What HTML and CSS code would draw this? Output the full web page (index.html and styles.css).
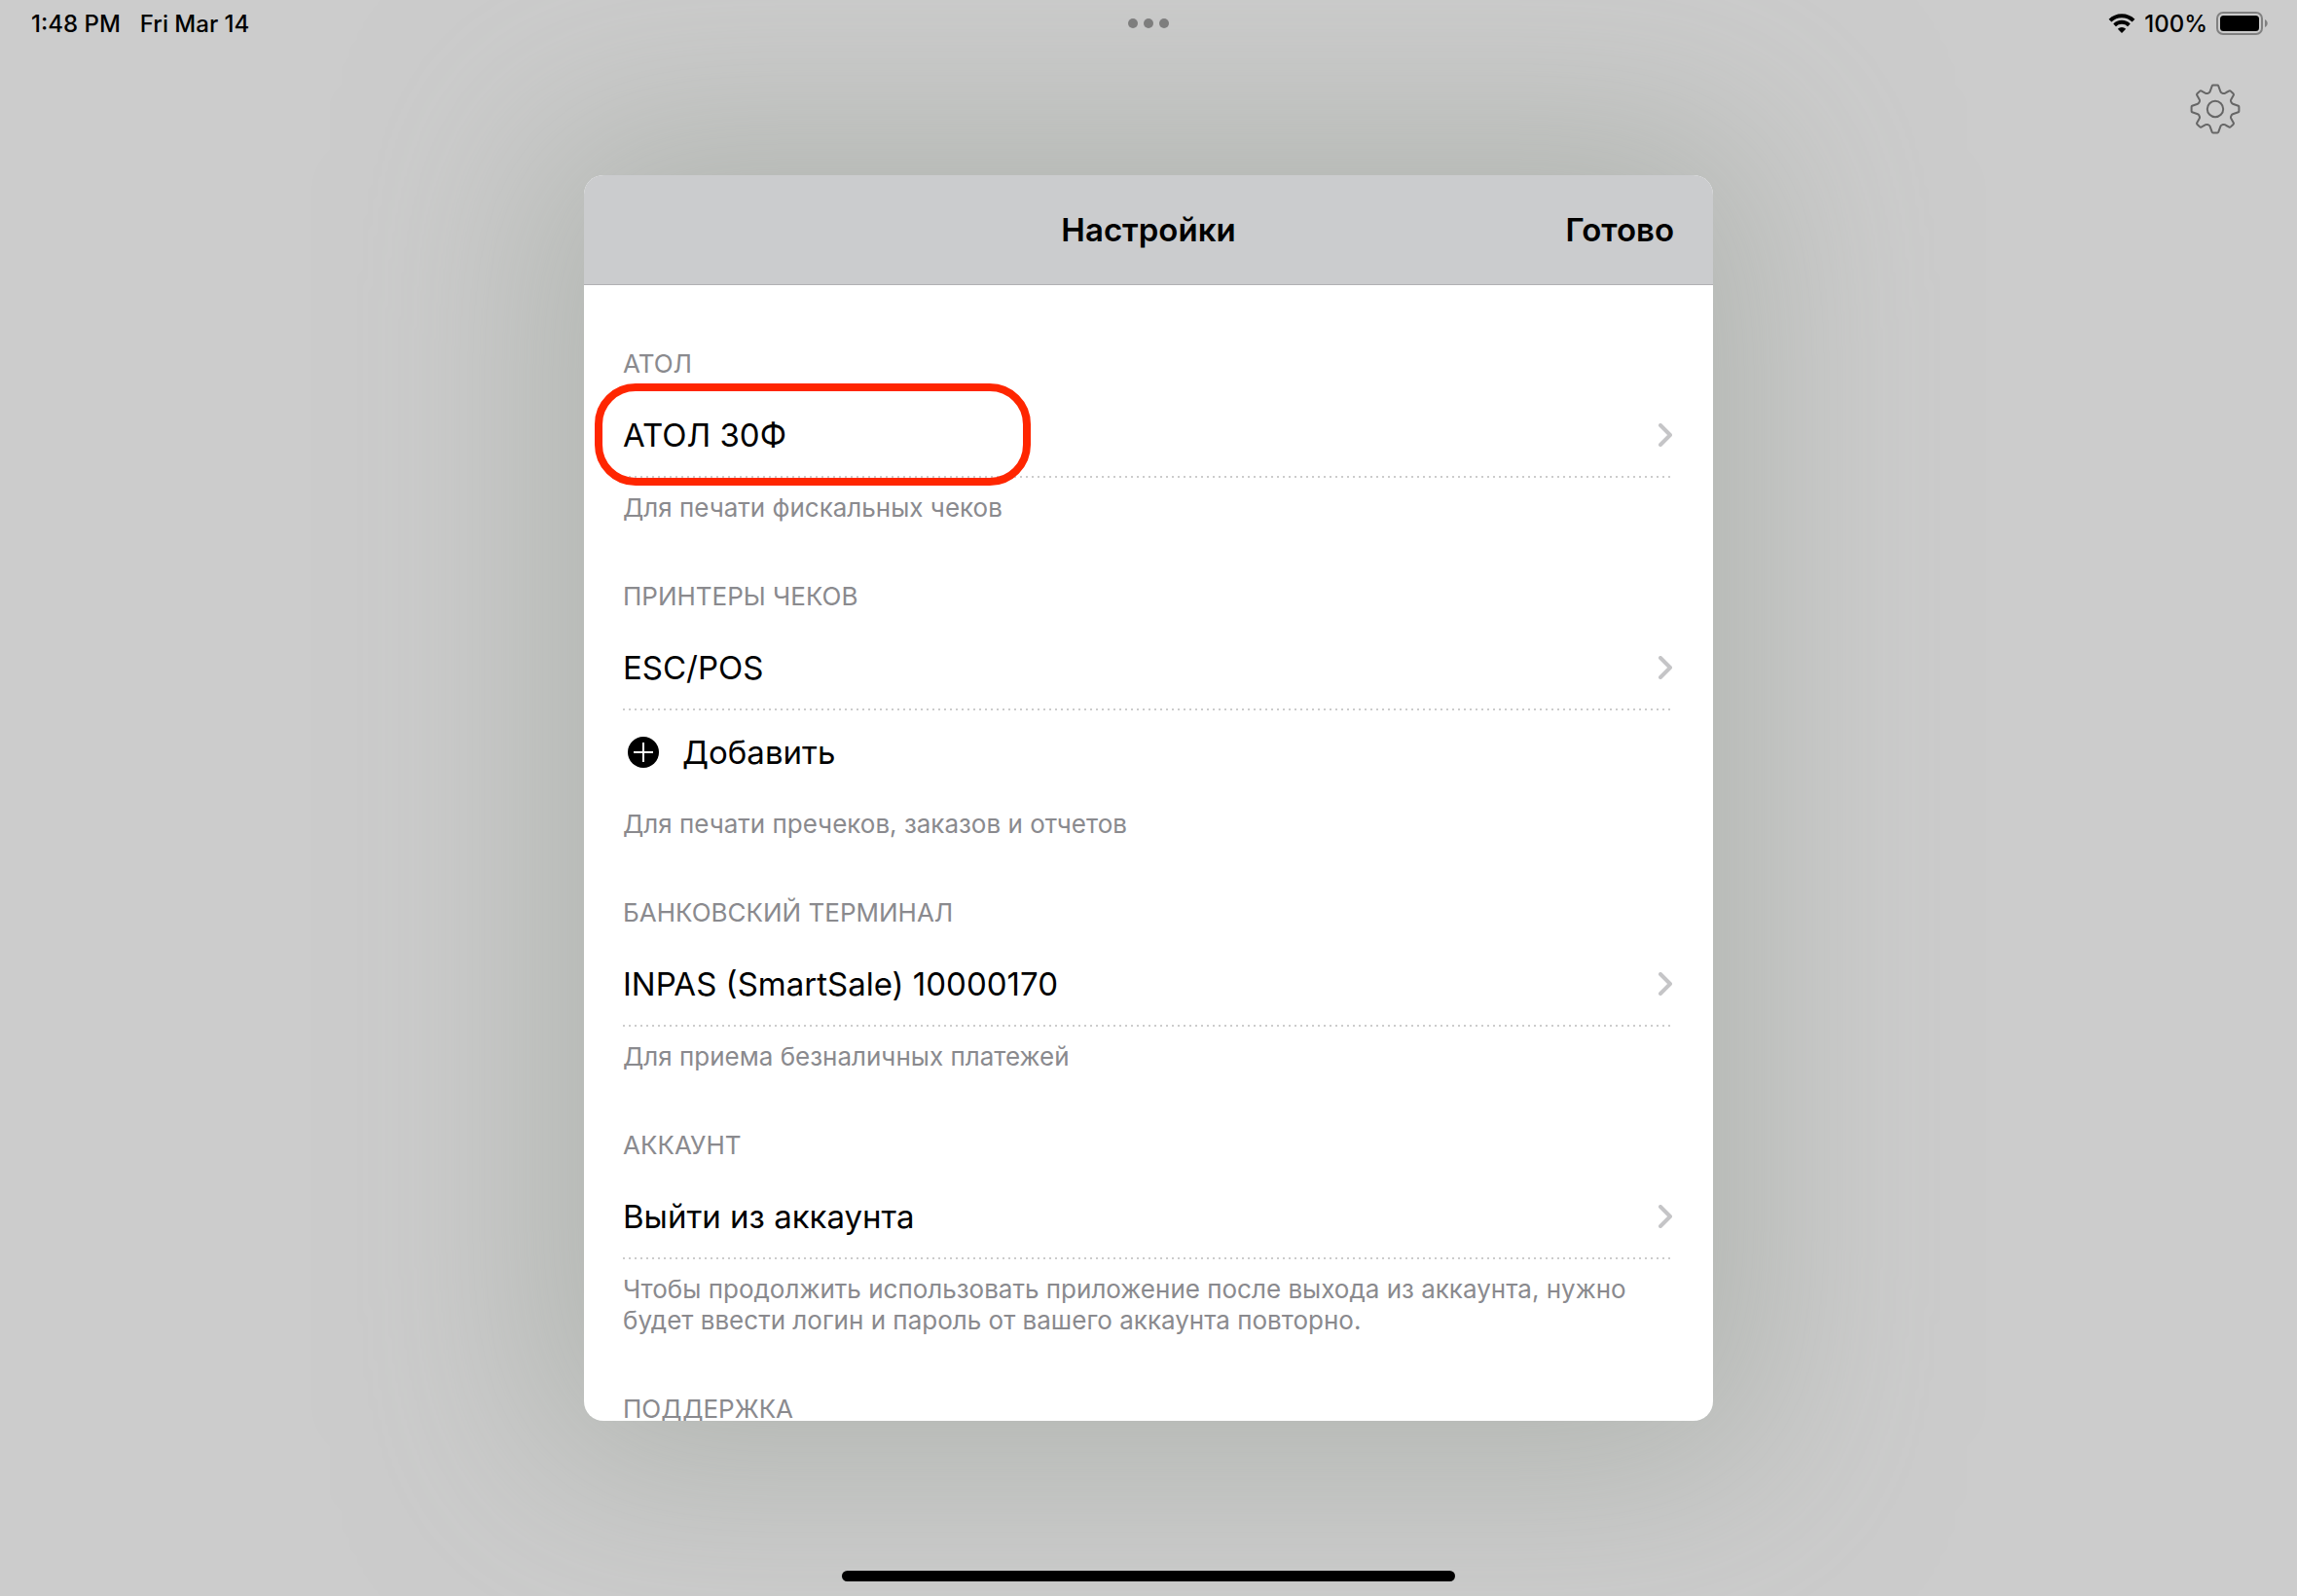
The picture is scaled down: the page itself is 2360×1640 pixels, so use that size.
FILE: index.html
```html
<!DOCTYPE html>
<html lang="ru">
<head>
    <meta charset="UTF-8">
    <meta name="viewport" content="width=device-width, initial-scale=1.0">
    <title>Настройки</title>
    <link rel="stylesheet" href="styles.css">
</head>
<body>

    <header class="status-bar">
        <div class="status-left">
            <span>1:48 PM</span>
            <span>Fri Mar 14</span>
        </div>
        <div class="status-dots">
            <i></i><i></i><i></i>
        </div>
        <div class="status-right">
            <svg class="wifi" width="28" height="20" viewBox="0 0 28 20">
                <path d="M2 7.2 A17 17 0 0 1 26 7.2" fill="none" stroke="#000" stroke-width="4"/>
                <path d="M6.6 11.8 A10.5 10.5 0 0 1 21.4 11.8" fill="none" stroke="#000" stroke-width="3.8"/>
                <path d="M14 20 L9.8 15.8 A6 6 0 0 1 18.2 15.8 Z" fill="#000"/>
            </svg>
            <span>100%</span>
            <svg class="battery" width="54" height="24" viewBox="0 0 54 24">
                <rect x="1" y="1" width="46" height="22" rx="6" fill="none" stroke="#808080" stroke-width="2"/>
                <rect x="4" y="4" width="40" height="16" rx="3.5" fill="#000"/>
                <path d="M50 8 C53.6 9.4 53.6 14.6 50 16 Z" fill="#808080"/>
            </svg>
        </div>
    </header>

    <div class="toolbar">
        <button class="gear-btn" aria-label="Настройки">
            <svg width="52" height="52" viewBox="0 0 52 52" fill="none" stroke="#666" stroke-width="2" stroke-linejoin="round">
                <path d="M22.7 2.3 Q23 1.6 23.8 1.6 H28.2 Q29 1.6 29.3 2.3 L31.4 8.1 Q31.8 9.2 32.9 9.6 L34 10 Q35 10.3 35.9 9.8 L40.4 7.4 Q41.2 7 41.8 7.6 L44.6 10.3 Q45.2 11 44.8 11.8 L42.3 16.2 Q41.8 17.1 42.1 18.1 L42.5 19.2 Q42.9 20.3 44 20.7 L49.7 22.7 Q50.4 23 50.4 23.8 V28.2 Q50.4 29 49.7 29.3 L44 31.3 Q42.9 31.7 42.5 32.8 L42.1 33.9 Q41.8 34.9 42.3 35.8 L44.8 40.2 Q45.2 41 44.6 41.7 L41.8 44.4 Q41.2 45 40.4 44.6 L35.9 42.2 Q35 41.7 34 42 L32.9 42.4 Q31.8 42.8 31.4 43.9 L29.3 49.7 Q29 50.4 28.2 50.4 H23.8 Q23 50.4 22.7 49.7 L20.6 43.9 Q20.2 42.8 19.1 42.4 L18 42 Q17 41.7 16.1 42.2 L11.6 44.6 Q10.8 45 10.2 44.4 L7.4 41.7 Q6.8 41 7.2 40.2 L9.7 35.8 Q10.2 34.9 9.9 33.9 L9.5 32.8 Q9.1 31.7 8 31.3 L2.3 29.3 Q1.6 29 1.6 28.2 V23.8 Q1.6 23 2.3 22.7 L8 20.7 Q9.1 20.3 9.5 19.2 L9.9 18.1 Q10.2 17.1 9.7 16.2 L7.2 11.8 Q6.8 11 7.4 10.3 L10.2 7.6 Q10.8 7 11.6 7.4 L16.1 9.8 Q17 10.3 18 10 L19.1 9.6 Q20.2 9.2 20.6 8.1 Z"/>
                <circle cx="26" cy="26" r="8.2"/>
            </svg>
        </button>
    </div>

    <main class="modal">
        <div class="modal-header">
            <h1>Настройки</h1>
            <button class="done-btn">Готово</button>
        </div>

        <div class="modal-body">
            <section>
                <h2>АТОЛ</h2>
                <a class="row selected" href="#">
                    <span>АТОЛ 30Ф</span>
                    <svg class="chevron" width="14" height="24" viewBox="0 0 14 24"><path d="M2 2 L12 12 L2 22"/></svg>
                </a>
                <p>Для печати фискальных чеков</p>
            </section>

            <section>
                <h2>ПРИНТЕРЫ ЧЕКОВ</h2>
                <a class="row" href="#">
                    <span>ESC/POS</span>
                    <svg class="chevron" width="14" height="24" viewBox="0 0 14 24"><path d="M2 2 L12 12 L2 22"/></svg>
                </a>
                <button class="add-btn">
                    <svg width="32" height="32" viewBox="0 0 32 32">
                        <circle cx="16" cy="16" r="16" fill="#000"/>
                        <path d="M16 6 V26 M6 16 H26" stroke="#fff" stroke-width="2"/>
                    </svg>
                    <span>Добавить</span>
                </button>
                <p>Для печати пречеков, заказов и отчетов</p>
            </section>

            <section>
                <h2>БАНКОВСКИЙ ТЕРМИНАЛ</h2>
                <a class="row" href="#">
                    <span>INPAS (SmartSale) 10000170</span>
                    <svg class="chevron" width="14" height="24" viewBox="0 0 14 24"><path d="M2 2 L12 12 L2 22"/></svg>
                </a>
                <p>Для приема безналичных платежей</p>
            </section>

            <section>
                <h2>АККАУНТ</h2>
                <a class="row" href="#">
                    <span>Выйти из аккаунта</span>
                    <svg class="chevron" width="14" height="24" viewBox="0 0 14 24"><path d="M2 2 L12 12 L2 22"/></svg>
                </a>
                <p>Чтобы продолжить использовать приложение после выхода из аккаунта, нужно будет ввести логин и пароль от вашего аккаунта повторно.</p>
            </section>

            <section>
                <h2>ПОДДЕРЖКА</h2>
            </section>
        </div>
    </main>

    <div class="home-indicator"></div>

</body>
</html>
```

FILE: styles.css
```css
* {
    margin: 0;
    padding: 0;
    box-sizing: border-box;
}
body {
    display: flex;
    flex-direction: column;
    height: 100vh;
    overflow: hidden;
    font-family: Inter, "Liberation Sans", sans-serif;
    background-color: #ccc;
    color: #000;
}
button {
    border: none;
    background: none;
    font-family: inherit;
    color: inherit;
    cursor: pointer;
}
svg {
    display: block;
    flex-shrink: 0;
}
.status-bar {
    display: grid;
    grid-template-columns: 1fr auto 1fr;
    align-items: center;
    height: 48px;
    padding: 0 29px;
    font-size: 24px;
    font-weight: 500;
}
.status-left {
    display: flex;
    gap: 20px;
    padding-left: 3px;
}
.status-dots {
    display: flex;
    gap: 6px;
}
.status-dots i {
    width: 10px;
    height: 10px;
    border-radius: 50%;
    background-color: #7d7d7d;
}
.status-right {
    display: flex;
    justify-content: flex-end;
    align-items: center;
    gap: 9px;
}
.toolbar {
    display: flex;
    justify-content: flex-end;
    height: 132px;
    padding: 38px 58px 0 0;
}
.gear-btn {
    width: 52px;
    height: 52px;
}
.modal {
    display: flex;
    flex-direction: column;
    flex: 1;
    width: 100%;
    max-width: 1160px;
    min-height: 0;
    margin: 0 auto;
    overflow: hidden;
    border-radius: 20px;
    background-color: #fff;
    box-shadow: 0 0 200px 40px rgba(150, 158, 148, 0.5);
}
.modal-header {
    display: grid;
    grid-template-columns: 1fr auto 1fr;
    align-items: center;
    flex-shrink: 0;
    height: 113px;
    padding: 0 40px;
    background-color: #cbccce;
    border-bottom: 1px solid #b0b0b3;
}
.modal-header h1 {
    grid-column: 2;
    font-size: 33px;
    font-weight: 600;
}
.done-btn {
    justify-self: end;
    font-size: 33px;
    font-weight: 600;
}
.modal-body {
    flex: 1;
    min-height: 0;
    overflow: hidden;
    padding: 65px 40px 0;
}
section {
    margin-bottom: 59px;
}
h2 {
    margin-bottom: 13px;
    font-size: 26px;
    font-weight: 400;
    line-height: 32px;
    color: #8a8a8e;
}
section p {
    margin-top: 15px;
    font-size: 26px;
    line-height: 32px;
    color: #8a8a8e;
}
.row {
    position: relative;
    display: flex;
    justify-content: space-between;
    align-items: center;
    height: 88px;
    padding-right: 2px;
    font-size: 33px;
    color: #000;
    text-decoration: none;
}
/* dotted separator */
.row::after {
    content: "";
    position: absolute;
    left: 0;
    right: 4px;
    bottom: 0;
    height: 2px;
    background: repeating-linear-gradient(to right, #ccc 0 2px, transparent 2px 6px);
}
/* red outline round the chosen device */
.selected::before {
    content: "";
    position: absolute;
    top: -9px;
    bottom: -8px;
    left: -29px;
    width: 432px;
    border: 8px solid #ff2600;
    border-radius: 42px;
    z-index: 1;
}
.chevron path {
    fill: none;
    stroke: #c5c5c7;
    stroke-width: 4;
    stroke-linecap: round;
    stroke-linejoin: round;
}
.add-btn {
    display: flex;
    align-items: center;
    gap: 24px;
    width: 100%;
    height: 86px;
    padding-left: 5px;
    font-size: 33px;
}
.home-indicator {
    flex-shrink: 0;
    width: 630px;
    height: 11px;
    margin: 154px auto 15px;
    border-radius: 6px;
    background-color: #000;
}
```
